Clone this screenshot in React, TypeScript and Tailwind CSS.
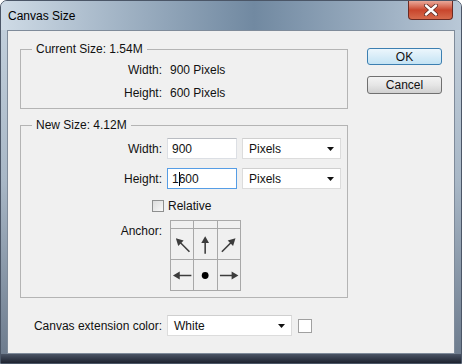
import React from 'react'

const font = { fontFamily: '"Liberation Sans", Arial, sans-serif' }

function DropArrow() {
  return (
    <svg width="7" height="4" viewBox="0 0 7 4" className="shrink-0">
      <path d="M0 0 L7 0 L3.5 4 Z" fill="#111" />
    </svg>
  )
}

function Select({ value, width }: { value: string; width: string }) {
  return (
    <div className={`${width} h-[21px] flex items-center justify-between pl-[6px] pr-[6px] bg-white border border-[#dcdcdc] border-t-[#cfcfcf]`}>
      <span>{value}</span>
      <DropArrow />
    </div>
  )
}

function Arrow({ kind }: { kind: string }) {
  const c = '#3c3c3c'
  return (
    <svg width="23" height="23" viewBox="0 0 23 23">
      {kind === 'nw' && (
        <>
          <line x1="19" y1="19" x2="9" y2="9" stroke={c} strokeWidth="1.6" />
          <path d="M5 5 L13 7.5 L7.5 13 Z" fill={c} />
        </>
      )}
      {kind === 'n' && (
        <>
          <line x1="11.5" y1="21" x2="11.5" y2="8" stroke={c} strokeWidth="1.6" />
          <path d="M11.5 3 L15.5 10 L7.5 10 Z" fill={c} />
        </>
      )}
      {kind === 'ne' && (
        <>
          <line x1="4" y1="19" x2="14" y2="9" stroke={c} strokeWidth="1.6" />
          <path d="M18 5 L15.5 13 L10 7.5 Z" fill={c} />
        </>
      )}
      {kind === 'w' && (
        <>
          <line x1="21" y1="11.5" x2="8" y2="11.5" stroke={c} strokeWidth="1.6" />
          <path d="M2 11.5 L9 7.5 L9 15.5 Z" fill={c} />
        </>
      )}
      {kind === 'c' && <circle cx="11.5" cy="11.5" r="3.5" fill="#000" />}
      {kind === 'e' && (
        <>
          <line x1="2" y1="11.5" x2="15" y2="11.5" stroke={c} strokeWidth="1.6" />
          <path d="M21 11.5 L14 7.5 L14 15.5 Z" fill={c} />
        </>
      )}
    </svg>
  )
}

const anchorCells = ['', '', '', 'nw', 'n', 'ne', 'w', 'c', 'e']

export default function App() {
  return (
    <div
      style={font}
      className="w-[462px] h-[364px] flex flex-col text-[12px] text-[#111] rounded-t-[7px] border border-[#4b5667] overflow-hidden bg-linear-to-b from-[#c6d3df] via-[#a8b7c6] to-[#6b798b]"
    >
      {/* Title bar */}
      <div className="relative h-[29px] shrink-0 flex items-center pl-[7px] bg-linear-to-r from-[#cfdbe6] via-[#7189a1] via-55% to-[#b9c8d7]">
        <span className="text-[12px] text-black">Canvas Size</span>
        <div className="absolute right-[8px] top-0 w-[45px] h-[19px] rounded-b-[4px] border border-t-0 border-[#6b2a22] bg-linear-to-b from-[#e9a899] via-[#c9452c] to-[#d66a4c] flex items-center justify-center">
          <svg width="14" height="12" viewBox="0 0 14 12">
            <path d="M2 1.5 L12 10.5 M12 1.5 L2 10.5" stroke="#5a2a24" strokeWidth="4" strokeLinecap="round" />
            <path d="M2 1.5 L12 10.5 M12 1.5 L2 10.5" stroke="#fff" strokeWidth="2.4" strokeLinecap="round" />
          </svg>
        </div>
      </div>

      {/* Client area */}
      <div className="flex-1 flex px-[6px]">
        <div className="flex-1 flex bg-[#f0f0f0] border border-[#7f8b9a] pt-[12px] pl-[12px]">
          {/* Left column */}
          <div className="w-[328px] flex flex-col">
            <fieldset className="border border-[#b4b4b4] pb-[4px]">
              <legend className="ml-[11px] px-[4px] leading-[13px]">Current Size: 1.54M</legend>
              <div className="pt-[2px]">
                <div className="flex h-[23px] items-center">
                  <span className="w-[141px] text-right">Width:</span>
                  <span className="ml-[8px]">900 Pixels</span>
                </div>
                <div className="flex h-[23px] items-center">
                  <span className="w-[141px] text-right">Height:</span>
                  <span className="ml-[8px]">600 Pixels</span>
                </div>
              </div>
            </fieldset>

            <fieldset className="mt-[10px] border border-[#b4b4b4] pt-[6px] pb-[6px]">
              <legend className="ml-[11px] px-[4px] leading-[13px]">New Size: 4.12M</legend>
              <div className="flex items-center">
                <span className="w-[141px] text-right">Width:</span>
                <div className="ml-[5px] w-[70px] h-[21px] flex items-center pl-[4px] bg-white border border-[#dcdfe4] border-t-[#b9bcc2]">
                  900
                </div>
                <div className="ml-[5px]">
                  <Select value="Pixels" width="w-[99px]" />
                </div>
              </div>
              <div className="flex items-center mt-[9px]">
                <span className="w-[141px] text-right">Height:</span>
                <div className="ml-[5px] w-[70px] h-[21px] flex items-center pl-[4px] bg-white border border-[#569de5]">
                  <span>1</span>
                  <span className="inline-block w-px h-[14px] bg-black -mr-[1px]" />
                  <span>600</span>
                </div>
                <div className="ml-[5px]">
                  <Select value="Pixels" width="w-[99px]" />
                </div>
              </div>
              <div className="flex items-center mt-[10px] h-[13px]">
                <div className="ml-[131px] w-[12px] h-[12px] border border-[#8e8f8f] bg-linear-to-br from-[#dcdcdc] to-[#f8f8f8]" />
                <span className="ml-[4px]">Relative</span>
              </div>
              <div className="flex mt-[8px]">
                <span className="w-[141px] text-right pt-[2px]">Anchor:</span>
                <div className="ml-[8px] grid grid-cols-3 w-[71px] h-[71px] border-t border-l border-[#a8a8a8]">
                  {anchorCells.map((k, i) => (
                    <div key={i} className="border-r border-b border-[#a8a8a8] flex items-center justify-center">
                      {k && <Arrow kind={k} />}
                    </div>
                  ))}
                </div>
              </div>
            </fieldset>

            <div className="flex items-center mt-[17px]">
              <span className="w-[142px] text-right">Canvas extension color:</span>
              <div className="ml-[5px]">
                <Select value="White" width="w-[125px]" />
              </div>
              <div className="ml-[6px] w-[14px] h-[14px] bg-white border border-[#a0a0a0]" />
            </div>
          </div>

          {/* Right column */}
          <div className="ml-[19px] pt-[5px] flex flex-col">
            <button className="w-[75px] h-[17px] rounded-[3px] border border-[#3c7fb1] bg-linear-to-b from-[#ecf6fc] to-[#c4e3f4] flex items-center justify-center leading-none">
              OK
            </button>
            <button className="mt-[11px] w-[75px] h-[18px] rounded-[3px] border border-[#707070] bg-linear-to-b from-[#f3f3f3] via-[#e6e6e6] to-[#d0d0d0] flex items-center justify-center leading-none">
              Cancel
            </button>
          </div>
        </div>
      </div>

      {/* Bottom frame */}
      <div className="h-[9px] shrink-0 bg-linear-to-b from-[#4b5566] to-[#1e2330]" />
    </div>
  )
}
